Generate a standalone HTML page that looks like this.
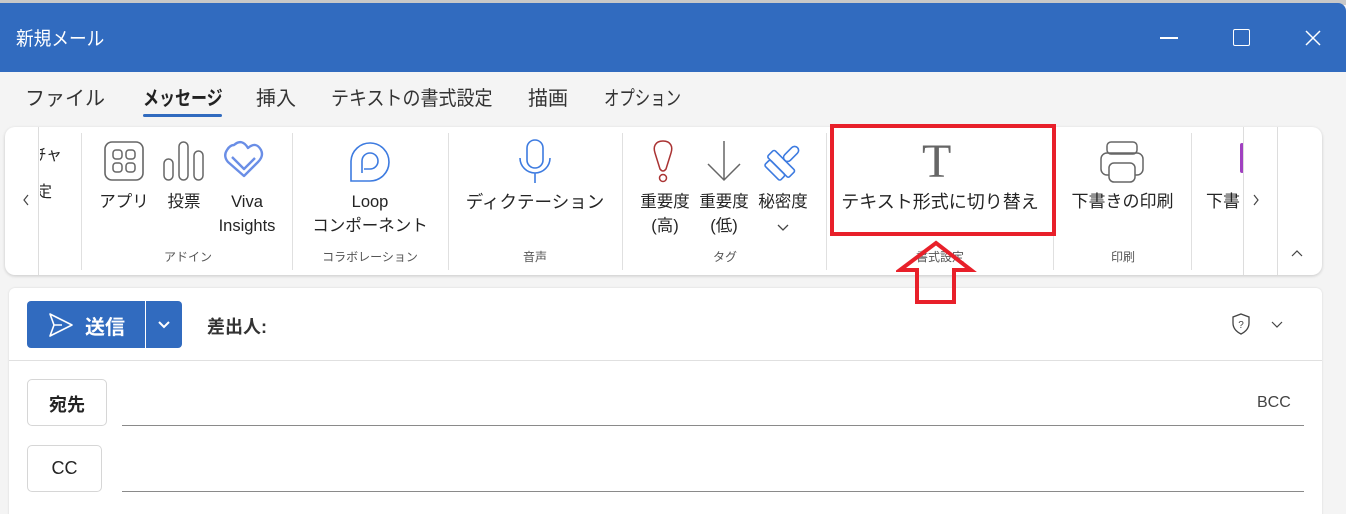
<!DOCTYPE html>
<html><head><meta charset="utf-8"><style>
*{margin:0;padding:0;box-sizing:border-box}
html,body{width:1346px;height:514px;overflow:hidden}
body{background:#f4f4f4;font-family:"Liberation Sans","Noto Sans CJK JP",sans-serif;color:#242424;position:relative}
.a{position:absolute}
.t{position:absolute;white-space:nowrap}
.sx{transform-origin:left top;display:inline-block}
.lbl{font-size:16.5px;text-align:center;line-height:24px}
.grp{font-size:12px;color:#555;text-align:center}
.sep{position:absolute;top:133px;width:1px;height:137px;background:#e0e0e0}
</style></head><body>
<div class="a" style="left:0;top:0;width:1346px;height:5px;background:#c8c8c8"></div>
<div class="a" style="left:0;top:3px;width:1346px;height:69px;background:#316bbf;border-top-right-radius:8px"></div>
<div class="t" style="left:16px;top:24px;font-size:19px;color:#fff"><span class="sx" style="transform:scaleX(0.93)">新規メール</span></div>
<div class="a" style="left:1160px;top:37px;width:18px;height:1.5px;background:#fff"></div>
<div class="a" style="left:1233px;top:29px;width:17px;height:17px;border:1.5px solid #fff;border-radius:2px"></div>
<svg class="a" style="left:1304px;top:29px" width="18" height="18"><path d="M2 2L16 16M16 2L2 16" stroke="#fff" stroke-width="1.5"/></svg>

<div class="t" style="left:25px;top:82px;font-size:20px;color:#333">ファイル</div>
<div class="t" style="left:143px;top:82px;font-size:20px;font-weight:bold;color:#222"><span class="sx" style="transform:scaleX(0.8)">メッセージ</span></div>
<div class="a" style="left:143px;top:114px;width:79px;height:3px;background:#316bbf;border-radius:2px"></div>
<div class="t" style="left:256px;top:82px;font-size:20px;color:#333">挿入</div>
<div class="t" style="left:331px;top:82px;font-size:20px;color:#333"><span class="sx" style="transform:scaleX(0.9)">テキストの書式設定</span></div>
<div class="t" style="left:528px;top:82px;font-size:20px;color:#333">描画</div>
<div class="t" style="left:604px;top:82px;font-size:20px;color:#333"><span class="sx" style="transform:scaleX(0.77)">オプション</span></div>

<div class="a" style="left:5px;top:127px;width:1317px;height:148px;background:#fff;border-radius:10px;box-shadow:0 1px 3px rgba(0,0,0,.18)"></div>
<div class="a" style="left:38px;top:127px;width:1px;height:148px;background:#ddd"></div>
<div class="t" style="left:38px;top:141px;font-size:16px;clip-path:inset(0 0 0 2px)">ﾁャ</div>
<div class="t" style="left:36px;top:178px;font-size:16px;clip-path:inset(0 0 0 4px)">定</div>
<svg class="a" style="left:21px;top:193px" width="10" height="14"><path d="M7 2L3 7L7 12" stroke="#444" fill="none" stroke-width="1.2"/></svg>

<div class="sep" style="left:81px"></div>
<div class="sep" style="left:292px"></div>
<div class="sep" style="left:448px"></div>
<div class="sep" style="left:622px"></div>
<div class="sep" style="left:826px"></div>
<div class="sep" style="left:1053px"></div>
<div class="sep" style="left:1191px"></div>

<svg class="a" style="left:104px;top:141px" width="40" height="40"><rect x="1" y="1" width="38" height="38" rx="7" fill="none" stroke="#666" stroke-width="1.6"/><rect x="9" y="9" width="9" height="9" rx="3" fill="none" stroke="#666" stroke-width="1.5"/><rect x="22" y="9" width="9" height="9" rx="3" fill="none" stroke="#666" stroke-width="1.5"/><rect x="9" y="22" width="9" height="9" rx="3" fill="none" stroke="#666" stroke-width="1.5"/><rect x="22" y="22" width="9" height="9" rx="3" fill="none" stroke="#666" stroke-width="1.5"/></svg>
<div class="t lbl" style="left:96px;top:190px;width:56px">アプリ</div>
<svg class="a" style="left:162px;top:141px" width="44" height="40"><rect x="2" y="18" width="9" height="21" rx="4.5" fill="none" stroke="#666" stroke-width="1.5"/><rect x="17" y="1" width="9" height="38" rx="4.5" fill="none" stroke="#666" stroke-width="1.5"/><rect x="32" y="10" width="9" height="29" rx="4.5" fill="none" stroke="#666" stroke-width="1.5"/></svg>
<div class="t lbl" style="left:160px;top:190px;width:48px">投票</div>
<svg class="a" style="left:222px;top:140px" width="42" height="42"><path d="M12 5 Q20 -2 26 8 Q34 1 39 10 Q42 16 36 22 L22 36 L6 22 Q1 16 5 10 Q8 5 12 5Z M10 17 L22 29 L33 18" fill="none" stroke="#6a8ee6" stroke-width="2.4" stroke-linejoin="round"/></svg>
<div class="t lbl" style="left:212px;top:190px;width:70px">Viva<br>Insights</div>
<div class="t grp" style="left:150px;top:248px;width:76px">アドイン</div>

<svg class="a" style="left:348px;top:139px" width="44" height="44"><path d="M3 42 L3 22 A19 19 0 1 1 22 42 Z" fill="none" stroke="#3d7be0" stroke-width="1.6"/><path d="M14 34 L14 22 A8 8 0 1 1 22 30 L16 30" fill="none" stroke="#3d7be0" stroke-width="1.6"/></svg>
<div class="t lbl" style="left:300px;top:190px;width:140px">Loop<br>コンポーネント</div>
<div class="t grp" style="left:300px;top:248px;width:140px">コラボレーション</div>

<svg class="a" style="left:518px;top:139px" width="34" height="44"><rect x="9" y="1" width="16" height="28" rx="8" fill="none" stroke="#3d7be0" stroke-width="1.6"/><path d="M2 19 A15 15 0 0 0 32 19 M17 34 V44" fill="none" stroke="#3d7be0" stroke-width="1.6"/></svg>
<div class="t lbl" style="left:455px;top:190px;width:160px;font-size:17.5px">ディクテーション</div>
<div class="t grp" style="left:455px;top:248px;width:160px">音声</div>

<svg class="a" style="left:651px;top:139px" width="24" height="46"><path d="M12 2 C4 2 2 8 4 14 L9 30 Q12 34 15 30 L20 14 C22 8 20 2 12 2Z" fill="none" stroke="#a33" stroke-width="1.5"/><circle cx="12" cy="39" r="3.5" fill="none" stroke="#a33" stroke-width="1.5"/></svg>
<div class="t lbl" style="left:636px;top:190px;width:58px">重要度<br>(高)</div>
<svg class="a" style="left:706px;top:140px" width="36" height="42"><path d="M18 1 V40 M2 24 L18 40 L34 24" fill="none" stroke="#666" stroke-width="1.5"/></svg>
<div class="t lbl" style="left:695px;top:190px;width:58px">重要度<br>(低)</div>
<svg class="a" style="left:762px;top:140px" width="44" height="42"><g transform="rotate(45 22 21)" fill="none" stroke="#3d7be0" stroke-width="1.6"><rect x="7" y="20" width="30" height="10" rx="2"/><rect x="11" y="30" width="22" height="8" rx="2"/><rect x="18" y="2" width="8" height="18" rx="4"/></g></svg>
<div class="t lbl" style="left:754px;top:190px;width:58px">秘密度</div>
<svg class="a" style="left:777px;top:224px" width="12" height="8"><path d="M1 1L6 6L11 1" stroke="#444" fill="none" stroke-width="1.3"/></svg>
<div class="t grp" style="left:690px;top:248px;width:70px">タグ</div>

<div class="t" style="left:922px;top:136px;font-family:'Liberation Serif',serif;font-size:48px;color:#666;line-height:52px">T</div>
<div class="t lbl" style="left:834px;top:190px;width:212px;font-size:18px">テキスト形式に切り替え</div>
<div class="t grp" style="left:880px;top:248px;width:120px">書式設定</div>

<svg class="a" style="left:1100px;top:141px" width="44" height="42"><rect x="7" y="1" width="30" height="12" rx="4" fill="none" stroke="#666" stroke-width="1.5"/><rect x="1" y="12" width="42" height="22" rx="6" fill="none" stroke="#666" stroke-width="1.5"/><rect x="9" y="22" width="26" height="19" rx="5" fill="#fff" stroke="#666" stroke-width="1.5"/></svg>
<div class="t lbl" style="left:1060px;top:190px;width:125px;font-size:17px">下書きの印刷</div>
<div class="t grp" style="left:1090px;top:248px;width:66px">印刷</div>
<div class="a" style="left:1240px;top:143px;width:4px;height:30px;background:#a040c0;border-radius:2px"></div>
<div class="t lbl" style="left:1206px;top:190px;font-size:17px">下書</div>
<div class="a" style="left:1243px;top:127px;width:35px;height:148px;background:#fff;border-left:1px solid #ddd;border-right:1px solid #ddd"></div>
<svg class="a" style="left:1251px;top:193px" width="10" height="14"><path d="M3 2L7 7L3 12" stroke="#444" fill="none" stroke-width="1.2"/></svg>
<svg class="a" style="left:1290px;top:249px" width="14" height="9"><path d="M2 7L7 2L12 7" stroke="#444" fill="none" stroke-width="1.2"/></svg>

<div class="a" style="left:9px;top:288px;width:1313px;height:240px;background:#fff;border-radius:6px;box-shadow:0 0 2px rgba(0,0,0,.12)"></div>
<div class="a" style="left:27px;top:301px;width:155px;height:47px;background:#316bbf;border-radius:4px"></div>
<div class="a" style="left:145px;top:301px;width:1px;height:47px;background:#fff"></div>
<svg class="a" style="left:48px;top:312px" width="26" height="26"><path d="M2 2 L24 13 L2 24 L6 13 Z M6 13 H14" fill="none" stroke="#fff" stroke-width="1.6" stroke-linejoin="round"/></svg>
<div class="t" style="left:85px;top:311px;font-size:20px;font-weight:bold;color:#fff">送信</div>
<svg class="a" style="left:157px;top:320px" width="14" height="10"><path d="M2 2L7 7L12 2" stroke="#fff" fill="none" stroke-width="2"/></svg>
<div class="t" style="left:207px;top:313px;font-size:18px;font-weight:bold;color:#333">差出人:</div>
<svg class="a" style="left:1231px;top:313px" width="20" height="22"><path d="M10 1 L18 4 V10 Q18 17 10 21 Q2 17 2 10 V4 Z" fill="none" stroke="#444" stroke-width="1.3"/><text x="10" y="15" font-size="10" text-anchor="middle" fill="#444" font-family="Liberation Sans">?</text></svg>
<svg class="a" style="left:1271px;top:321px" width="12" height="8"><path d="M1 1L6 6L11 1" stroke="#444" fill="none" stroke-width="1.2"/></svg>
<div class="a" style="left:9px;top:360px;width:1313px;height:1px;background:#e0e0e0"></div>
<div class="a" style="left:27px;top:379px;width:80px;height:47px;border:1px solid #d6d6d6;border-radius:5px"></div>
<div class="t" style="left:27px;top:391px;width:80px;text-align:center;font-size:18px;font-weight:bold">宛先</div>
<div class="a" style="left:122px;top:425px;width:1182px;height:1px;background:#8a8a8a"></div>
<div class="t" style="left:1257px;top:394px;font-size:16px;color:#444">BCC</div>
<div class="a" style="left:27px;top:445px;width:75px;height:47px;border:1px solid #d6d6d6;border-radius:5px"></div>
<div class="t" style="left:27px;top:458px;width:75px;text-align:center;font-size:18px">CC</div>
<div class="a" style="left:122px;top:491px;width:1182px;height:1px;background:#8a8a8a"></div>

<div class="a" style="left:830px;top:124px;width:226px;height:112px;border:4px solid #e8202a;z-index:5"></div>
<svg class="a" style="left:896px;top:240px;z-index:5" width="82" height="66"><path d="M40 3 L75 30 L58 30 L58 62 L21 62 L21 30 L4 30 Z" fill="none" stroke="#e8202a" stroke-width="4"/></svg>
</body></html>
